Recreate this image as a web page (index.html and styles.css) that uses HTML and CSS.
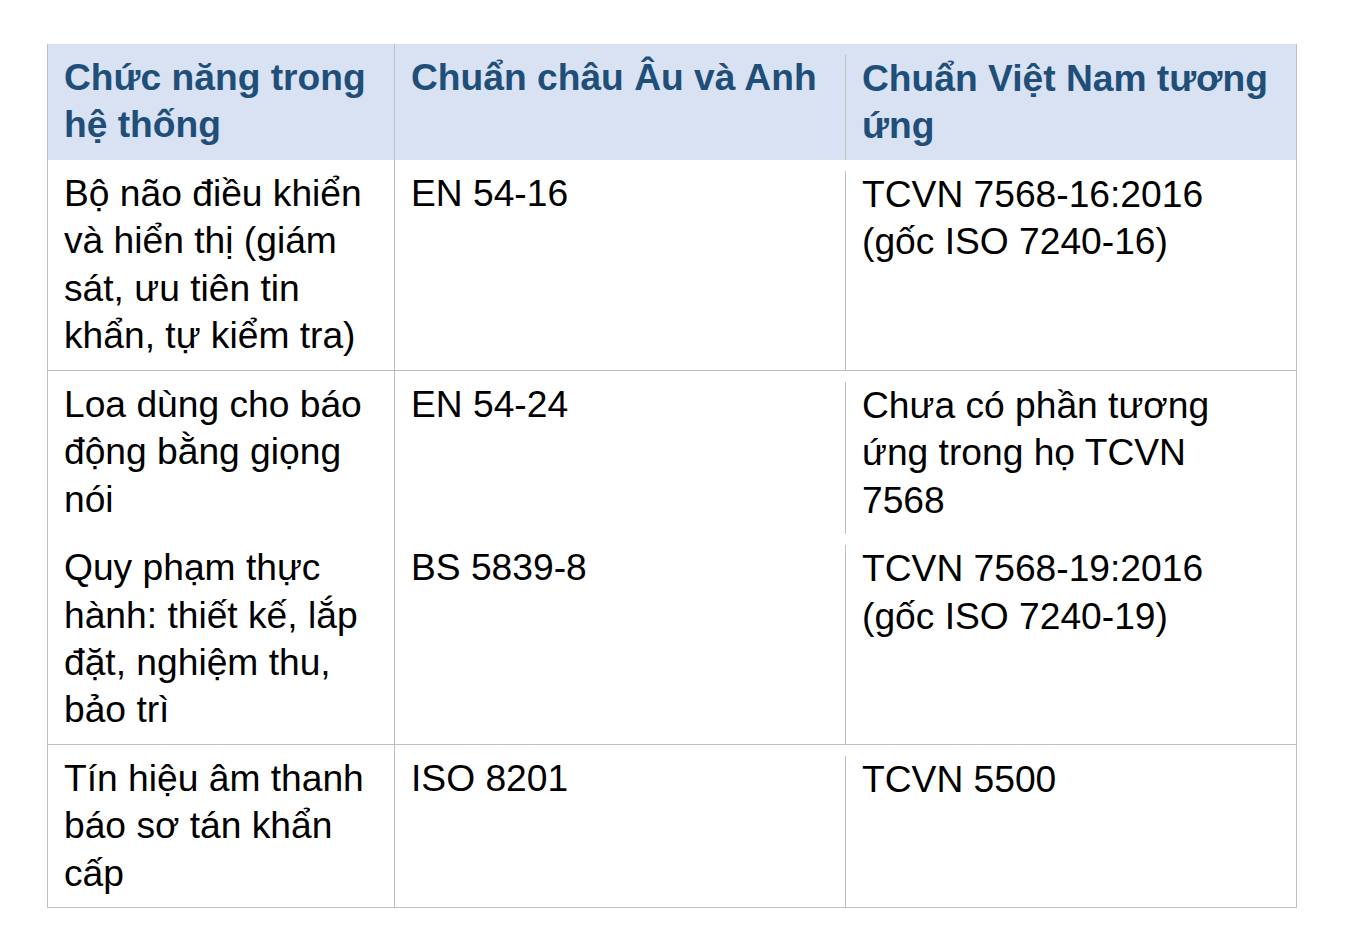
FILE: index.html
```html
<!DOCTYPE html>
<html lang="vi">
<head>
<meta charset="utf-8">
<title>Bảng tiêu chuẩn</title>
<link rel="stylesheet" href="styles.css">
</head>
<body>
<div class="table">
  <div class="row head">
    <div class="cell c1">Chức năng trong<br>hệ thống</div>
    <div class="cell c2">Chuẩn châu Âu và Anh</div>
    <div class="cell c3">Chuẩn Việt Nam tương<br>ứng</div>
  </div>
  <div class="row line">
    <div class="cell c1">Bộ não điều khiển<br>và hiển thị (giám<br>sát, ưu tiên tin<br>khẩn, tự kiểm tra)</div>
    <div class="cell c2">EN 54-16</div>
    <div class="cell c3">TCVN 7568-16:2016<br>(gốc ISO 7240-16)</div>
  </div>
  <div class="row">
    <div class="cell c1">Loa dùng cho báo<br>động bằng giọng<br>nói</div>
    <div class="cell c2">EN 54-24</div>
    <div class="cell c3">Chưa có phần tương<br>ứng trong họ TCVN<br>7568</div>
  </div>
  <div class="row line">
    <div class="cell c1">Quy phạm thực<br>hành: thiết kế, lắp<br>đặt, nghiệm thu,<br>bảo trì</div>
    <div class="cell c2">BS 5839-8</div>
    <div class="cell c3">TCVN 7568-19:2016<br>(gốc ISO 7240-19)</div>
  </div>
  <div class="row">
    <div class="cell c1">Tín hiệu âm thanh<br>báo sơ tán khẩn<br>cấp</div>
    <div class="cell c2">ISO 8201</div>
    <div class="cell c3">TCVN 5500</div>
  </div>
</div>
</body>
</html>
```

FILE: styles.css
```css
html, body {
  margin: 0;
  padding: 0;
  background: #ffffff;
}

body {
  font-family: "Liberation Sans", Arial, sans-serif;
  font-size: 37.2px;
  line-height: 47.45px;
  color: #000000;
}

.table {
  margin: 44px 0 0 47px;
  width: 1250px;
  box-sizing: border-box;
  border-left: 1px solid #bfbfbf;
  border-right: 1px solid #bfbfbf;
  border-bottom: 1px solid #bfbfbf;
}

.row {
  display: grid;
  grid-template-columns: 346px 451px 451px;
}

.row.line {
  border-bottom: 1px solid #bfbfbf;
}

.row.head {
  background: #d9e2f3;
  color: #1f4e79;
  font-weight: bold;
}

.cell {
  padding: 10px 16px;
}

.c2 {
  border-left: 1px solid #bfbfbf;
}

.c3 {
  border-left: 1px solid #bfbfbf;
  margin-top: 11px;
  padding-top: 0;
}
```
